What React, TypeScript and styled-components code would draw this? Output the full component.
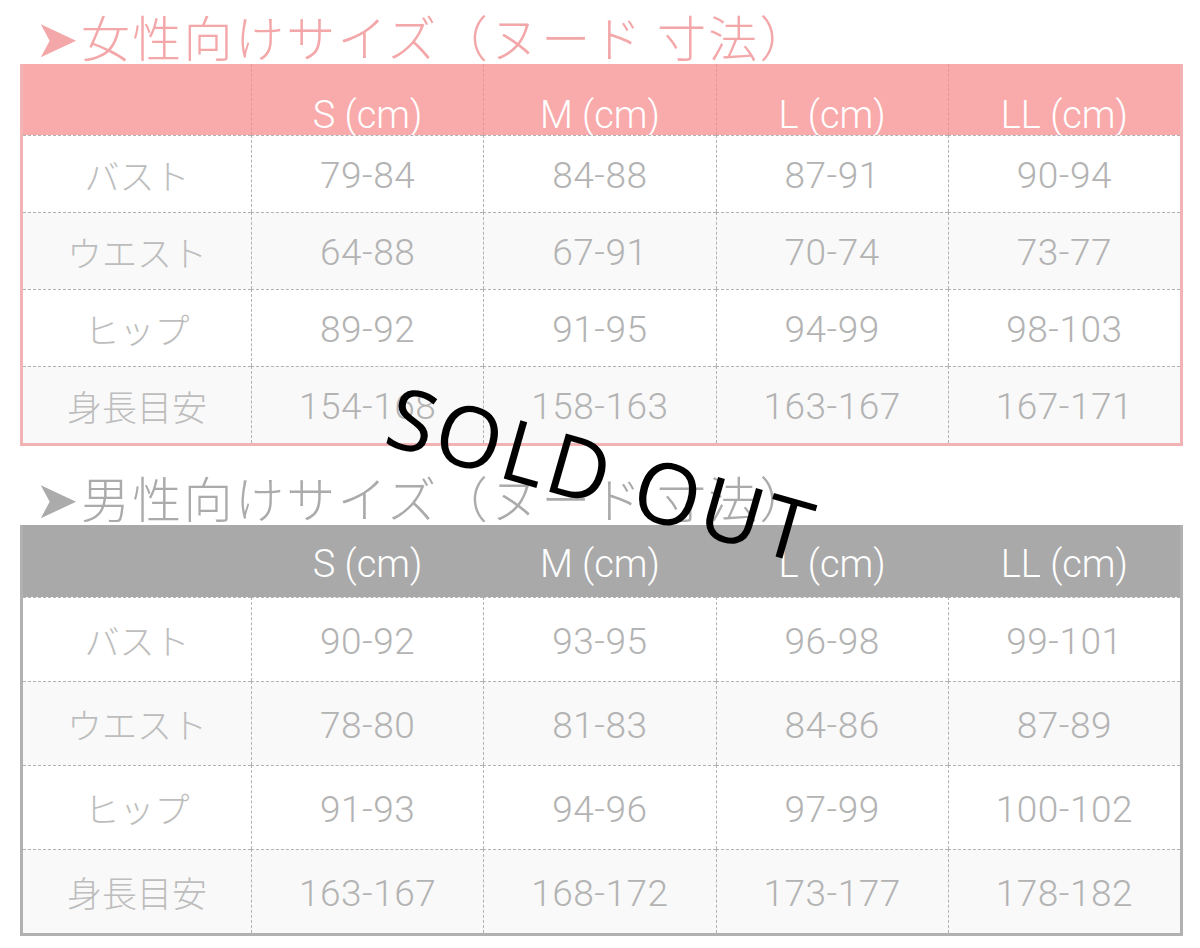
import styled, { createGlobalStyle } from "styled-components";

type Tone = "pink" | "gray";

interface SizeTableProps {
  title: string;
  tone: Tone;
  rows: string[][];
}

const tones = {
  pink: {
    title: "#f3a7a9",
    head: "#f9abac",
    border: "#f2b3b4",
    sep: "rgba(150, 90, 90, 0.25)",
    headPad: 31,
    headH: 71,
    rowH: 77,
  },
  gray: {
    title: "#ababab",
    head: "#a9a9a9",
    border: "#b1b1b1",
    sep: "transparent",
    headPad: 6,
    headH: 72,
    rowH: 84,
  },
};

const sizes = ["S (cm)", "M (cm)", "L (cm)", "LL (cm)"];
const labels = ["バスト", "ウエスト", "ヒップ", "身長目安"];

const womenRows = [
  ["79-84", "84-88", "87-91", "90-94"],
  ["64-88", "67-91", "70-74", "73-77"],
  ["89-92", "91-95", "94-99", "98-103"],
  ["154-168", "158-163", "163-167", "167-171"],
];

const menRows = [
  ["90-92", "93-95", "96-98", "99-101"],
  ["78-80", "81-83", "84-86", "87-89"],
  ["91-93", "94-96", "97-99", "100-102"],
  ["163-167", "168-172", "173-177", "178-182"],
];

const SizeTable = ({ title, tone, rows }: SizeTableProps) => {
  return (
    <Section>
      <Title $tone={tone}>
        <Arrow>➤</Arrow>
        {title}
      </Title>
      <Table $tone={tone}>
        <HeadCell $tone={tone} $first />
        {sizes.map((s) => (
          <HeadCell key={s} $tone={tone}>
            {s}
          </HeadCell>
        ))}
        {rows.map((row, i) => (
          <Row key={labels[i]}>
            <LabelCell $tone={tone} $odd={i % 2 === 1}>
              {labels[i]}
            </LabelCell>
            {row.map((v, j) => (
              <ValueCell key={j} $tone={tone} $odd={i % 2 === 1}>
                {v}
              </ValueCell>
            ))}
          </Row>
        ))}
      </Table>
    </Section>
  );
};

const App = () => {
  return (
    <>
      <GlobalStyle />
      <Page>
        <SizeTable title="女性向けサイズ（ヌード 寸法）" tone="pink" rows={womenRows} />
        <SizeTable title="男性向けサイズ（ヌード 寸法）" tone="gray" rows={menRows} />
        <Stamp>SOLD OUT</Stamp>
      </Page>
    </>
  );
};

export default App;

const GlobalStyle = createGlobalStyle`
  body {
    margin: 0;
    background: #fff;
  }
`;

const Page = styled.div`
  position: relative;
  width: 1200px;
  height: 948px;
  padding-left: 20px;
  box-sizing: border-box;
  overflow: hidden;
`;

const Section = styled.section`
  width: 1163px;
  & + & {
    margin-top: 15px;
  }
`;

const Title = styled.h2<{ $tone: Tone }>`
  margin: 0;
  height: 64px;
  box-sizing: border-box;
  padding: 4px 0 0 15px;
  font-family: "Noto Sans CJK JP", "DejaVu Sans", sans-serif;
  font-size: 49px;
  font-weight: 300;
  letter-spacing: 2.3px;
  line-height: 64px;
  white-space: nowrap;
  color: ${(p) => tones[p.$tone].title};
`;

const Arrow = styled.span`
  font-family: "DejaVu Sans", sans-serif;
  font-size: 52px;
  letter-spacing: 2px;
`;

const Table = styled.div<{ $tone: Tone }>`
  position: relative;
  display: grid;
  grid-template-columns: 228px repeat(4, 1fr);
  border: 3px solid ${(p) => tones[p.$tone].border};
  border-top: none;
  background: ${(p) => tones[p.$tone].head};
`;

const Row = styled.div`
  display: contents;
`;

const HeadCell = styled.div<{ $tone: Tone; $first?: boolean }>`
  height: ${(p) => tones[p.$tone].headH}px;
  box-sizing: border-box;
  padding-top: ${(p) => tones[p.$tone].headPad}px;
  display: flex;
  align-items: center;
  justify-content: center;
  background: ${(p) => tones[p.$tone].head};
  border-left: ${(p) => (p.$first ? "none" : `1px dashed ${tones[p.$tone].sep}`)};
  font-family: Roboto, "Liberation Sans", sans-serif;
  font-size: 38px;
  font-weight: 300;
  color: #fff;
`;

const BodyCell = styled.div<{ $tone: Tone; $odd: boolean }>`
  height: ${(p) => tones[p.$tone].rowH}px;
  box-sizing: border-box;
  display: flex;
  align-items: center;
  justify-content: center;
  background: ${(p) => (p.$odd ? "#f9f9f9" : "#fff")};
  border-top: 1px dashed #b2b2b2;
`;

const LabelCell = styled(BodyCell)`
  font-family: "Noto Sans CJK JP", sans-serif;
  font-size: 35px;
  font-weight: 300;
  color: #bdbdbd;
`;

const ValueCell = styled(BodyCell)`
  padding-top: 3px;
  border-left: 1px dashed #b2b2b2;
  font-family: Roboto, "Liberation Sans", sans-serif;
  font-size: 37px;
  font-weight: 300;
  letter-spacing: 0.5px;
  color: #b3b3b3;
`;

const Stamp = styled.div`
  position: absolute;
  left: 602px;
  top: 473px;
  transform: translate(-50%, -50%) rotate(16deg);
  font-family: "Open Sans", "Noto Sans", sans-serif;
  font-size: 85px;
  letter-spacing: 3px;
  line-height: 1;
  white-space: nowrap;
  color: #000;
`;
